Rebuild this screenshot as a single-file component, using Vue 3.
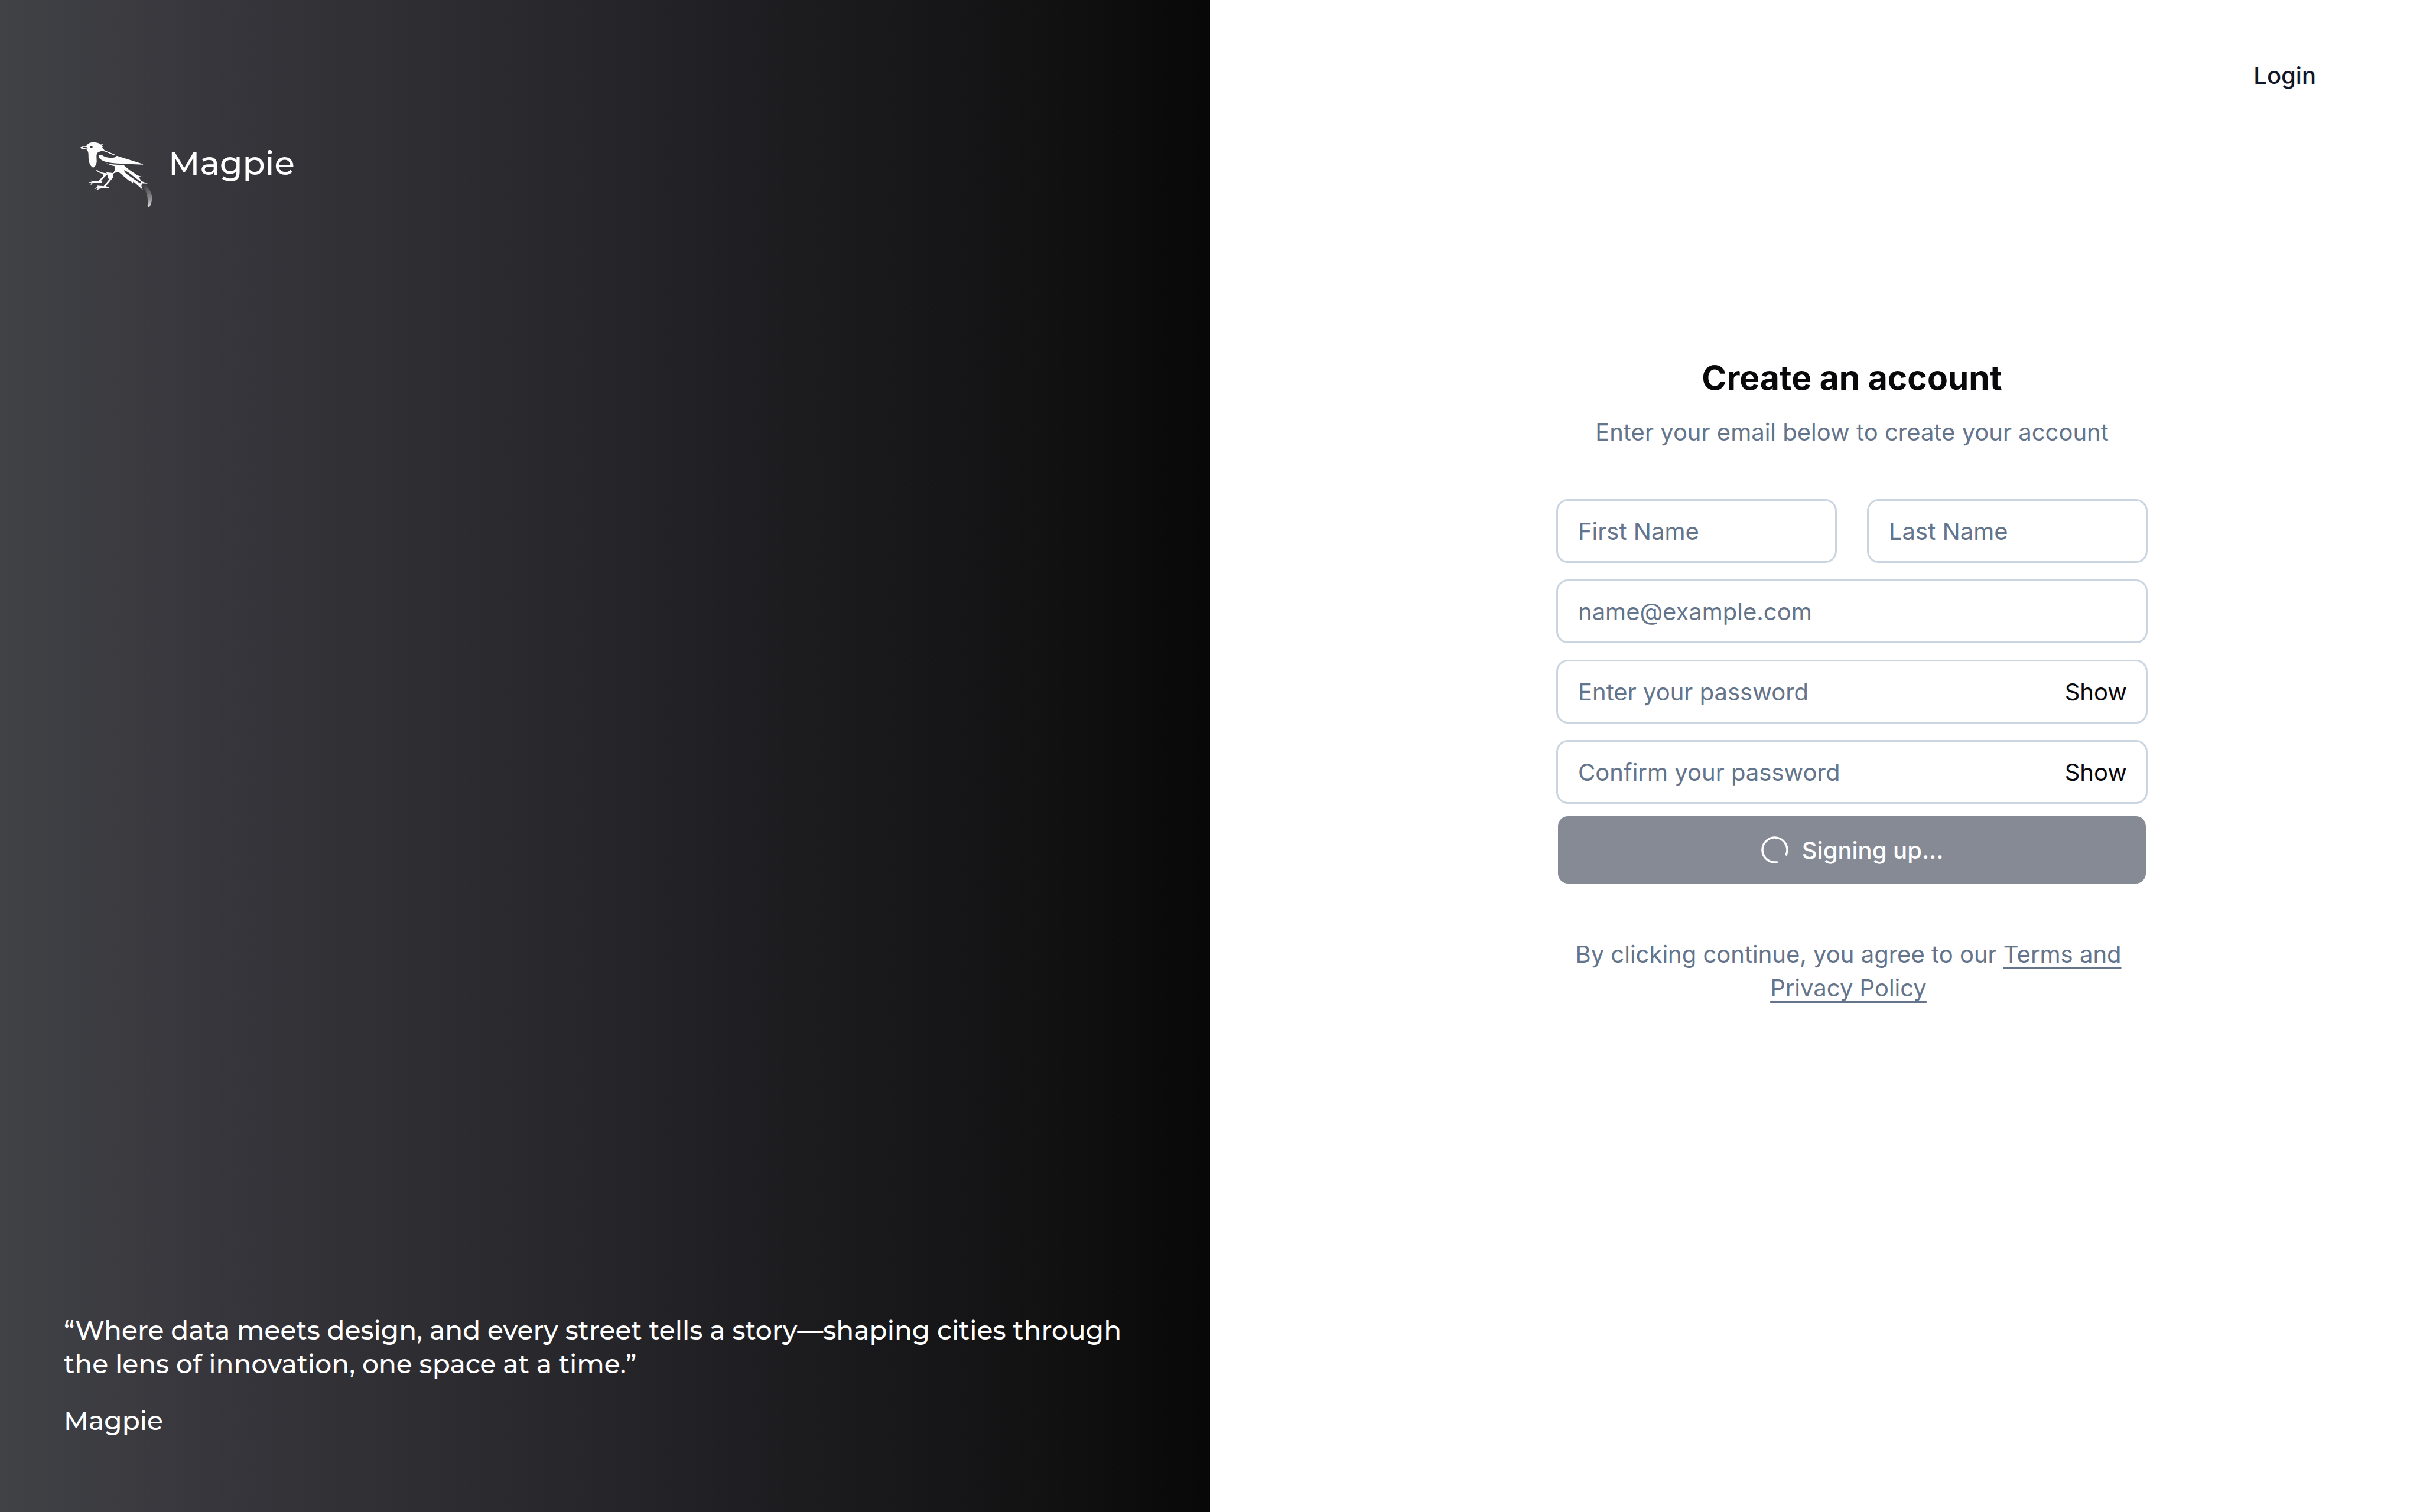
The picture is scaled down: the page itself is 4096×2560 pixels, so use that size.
<script setup>
import { reactive, ref } from 'vue'

const form = reactive({ first: '', last: '', email: '', password: '', confirm: '' })
const visible = reactive({ password: false, confirm: false })
const loading = ref(true)

const passwords = [
  { key: 'password', placeholder: 'Enter your password' },
  { key: 'confirm', placeholder: 'Confirm your password' },
]
</script>

<template>
  <div class="page">
    <aside class="brand">
      <div class="logo">
        <svg class="bird" viewBox="0 0 540 480" fill="#fcfcfc" aria-hidden="true">
          <defs>
            <linearGradient id="feather" x1="400" y1="292" x2="436" y2="418" gradientUnits="userSpaceOnUse">
              <stop offset="0" stop-color="#333237" />
              <stop offset="0.3" stop-color="#5c5b5f" />
              <stop offset="0.7" stop-color="#8f8e90" />
              <stop offset="1" stop-color="#dcdcdc" />
            </linearGradient>
          </defs>
          <path
            fill-rule="evenodd"
            d="M68 101C76 95 88 93 101 94C106 80 122 71 142 72C160 73 172 77 178 84L191 82L183 90L194 95L186 98C190 106 196 114 204 118L250 136Q256 140 250 141C232 136 215 126 198 121C180 117 163 122 158 134C154 143 157 160 157 175C156 190 148 203 138 208C126 203 116 185 114 165C112 150 114 135 111 124C108 115 103 110 96 109L76 107ZM80 98C92 106 102 107 112 104C106 97 92 96 80 98ZM122 98a6.500 6.500 0 1 0 13 0a6.500 6.500 0 1 0-13 0Z"
          />
          <path d="M167 146C170 137 184 138 192 145C206 154 238 158 254 152C262 149 260 143 269 146L404 189Q407 191 403 192L330 189C290 187 240 186 206 177C185 171 168 160 167 146Z" />
          <path
            fill-rule="evenodd"
            d="M207 183C225 190 270 192 303 196C312 203 325 217 340 226L377 250L397 256L381 258L397 280L430 293L410 292L398 294L396 306L403 326L353 282L349 292L340 280L328 276L275 232C262 232 252 235 246 240C244 250 246 258 242 264C232 276 218 292 206 307L221 312L222 317L196 316L170 321L158 329L155 326L168 315L146 322L144 318L166 310L158 307L160 304L194 307L222 272C216 258 214 244 206 228L214 234L245 237C254 226 258 210 252 200C238 196 220 192 207 183ZM303 222C316 224 342 246 360 260L394 284Q396 292 388 291L346 262C326 248 306 238 303 222Z"
          />
          <path
            d="M152 218L158 218C166 228 184 236 208 238L214 244C204 252 196 262 178 280L187 283L186 287L160 288L134 291L127 300L123 297L130 289L116 289L116 285L134 284L123 280L126 277L148 280L166 279L190 256C194 250 194 245 190 241C174 238 158 230 152 218Z"
          />
          <path
            fill="url(#feather)"
            d="M398 292C415 290 440 315 451 355C455 385 447 405 440 415C434 420 428 416 429 408C432 380 428 345 412 322C405 312 398 302 398 292Z"
          />
        </svg>
        <span class="name">Magpie</span>
      </div>
      <blockquote class="quote">
        <p>“Where data meets design, and every street tells a story—shaping cities through the lens of innovation, one space at a time.”</p>
        <footer>Magpie</footer>
      </blockquote>
    </aside>

    <main class="panel">
      <nav class="top"><a href="#login">Login</a></nav>

      <section class="signup">
        <h1>Create an account</h1>
        <p class="lead">Enter your email below to create your account</p>

        <form @submit.prevent>
          <div class="row">
            <div class="field">
              <input v-model="form.first" type="text" placeholder="First Name" aria-label="First Name" />
            </div>
            <div class="field">
              <input v-model="form.last" type="text" placeholder="Last Name" aria-label="Last Name" />
            </div>
          </div>
          <div class="field">
            <input v-model="form.email" type="email" placeholder="name@example.com" aria-label="Email" />
          </div>
          <div v-for="p in passwords" :key="p.key" class="field">
            <input
              v-model="form[p.key]"
              :type="visible[p.key] ? 'text' : 'password'"
              :placeholder="p.placeholder"
              :aria-label="p.placeholder"
            />
            <button type="button" class="toggle" @click="visible[p.key] = !visible[p.key]">
              {{ visible[p.key] ? 'Hide' : 'Show' }}
            </button>
          </div>
          <button type="submit" class="submit" :disabled="loading">
            <svg class="spinner" viewBox="0 0 48 48" fill="none" stroke="#fff" stroke-width="3.500" aria-hidden="true">
              <path d="M28.700 44.500A21 21 0 1 1 42.700 33.500" />
            </svg>
            Signing up...
          </button>
        </form>

        <p class="legal">By clicking continue, you agree to our <a href="#terms">Terms and Privacy Policy</a></p>
      </section>
    </main>
  </div>
</template>

<style>
body {
  margin: 0;
  background: #fff;
}
</style>

<style scoped>
* {
  box-sizing: border-box;
}
.page {
  display: grid;
  grid-template-columns: minmax(0, 1fr) minmax(0, 1fr);
  min-height: 100vh;
  font-family: Inter, "Liberation Sans", sans-serif;
  font-size: 40px;
  line-height: 57px;
}
.brand {
  display: flex;
  flex-direction: column;
  justify-content: space-between;
  padding: 218px 108px 126px;
  color: #fff;
  font-family: Montserrat, Inter, sans-serif;
  font-weight: 500;
  background: linear-gradient(90deg, #404246 0%, #38373d 16%, #262529 50%, #1c1c1f 66%, #121213 86%, #080809 100%);
}
.logo {
  display: flex;
  align-items: flex-start;
}
.bird {
  width: 171px;
  height: 152px;
  margin-left: 6px;
}
.name {
  font-size: 56px;
  line-height: 116px;
}
.quote {
  margin: 0;
  font-size: 44px;
}
.quote p {
  margin: 0 0 39px;
}
.panel {
  display: flex;
  flex-direction: column;
  background: #fff;
}
.top {
  display: flex;
  justify-content: flex-end;
  padding: 99px 176px 0;
}
.top a {
  color: #0f172a;
  font-weight: 500;
  text-decoration: none;
}
.signup {
  align-self: center;
  width: 1001px;
  margin: 444px 0 0 125px;
  text-align: center;
}
h1 {
  margin: 0 0 23px;
  color: #09090b;
  font-size: 57px;
  font-weight: 700;
  line-height: 80px;
}
.lead {
  margin: 0 0 85px;
  color: #64748b;
}
form {
  display: flex;
  flex-direction: column;
  gap: 28px;
}
.row {
  display: grid;
  grid-template-columns: minmax(0, 1fr) minmax(0, 1fr);
  gap: 51px;
}
.field {
  display: flex;
  align-items: center;
  height: 108px;
  padding: 0 32px 0 34px;
  border: 3px solid #cbd5e1;
  border-radius: 20px;
}
input {
  flex: 1;
  min-width: 0;
  padding: 0;
  border: 0;
  outline: 0;
  background: transparent;
  color: #09090b;
  font: inherit;
}
input::placeholder {
  color: #64748b;
  opacity: 1;
}
button {
  padding: 0;
  border: 0;
  font: inherit;
}
.toggle {
  background: transparent;
  color: #09090b;
}
.submit {
  display: flex;
  align-items: center;
  justify-content: center;
  gap: 22px;
  height: 114px;
  margin: -7px 3px 0;
  border-radius: 17px;
  background: #868a94;
  color: #fff;
  font-weight: 500;
}
.spinner {
  width: 48px;
  height: 48px;
}
.legal {
  margin: 91px 0 0;
  padding: 0 40px 0 28px;
  color: #64748b;
}
.legal a {
  color: inherit;
  text-decoration: underline;
  text-decoration-thickness: 3px;
  text-underline-offset: 8px;
}
</style>
